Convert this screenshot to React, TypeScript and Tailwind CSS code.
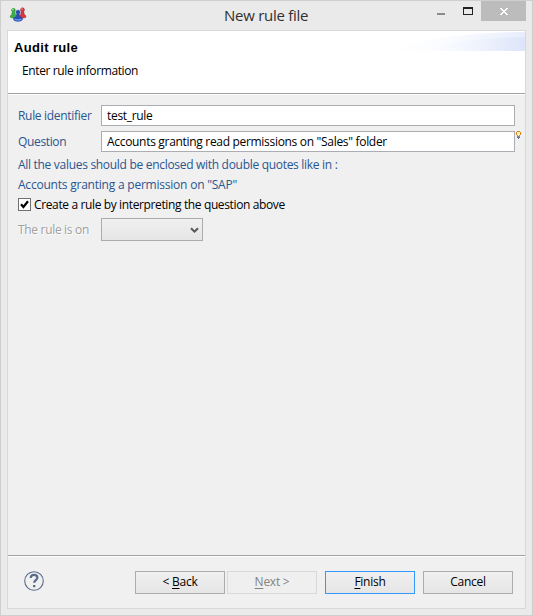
import type { ReactNode } from "react";

function AppIcon() {
  return (
    <svg width="18" height="16" viewBox="0 0 18 16" className="mt-[6px] ml-[8px] shrink-0">
      <g strokeWidth="0.5">
        <path d="M2.600 2.600a1.900 1.900 0 0 1 3.600 0c.3 1-.1 1.500-.6 2.100l.8 2.800 1.200 1v1.700c-1.500 1-4.800 1-6.400 0V8.900l1.500-1.200.6-3c-.6-.6-.9-1.200-.7-2.100z" fill="#3fae45" stroke="#1d7a2d" />
        <path d="M11.600 2.200a2 2 0 0 1 3.800 0c.2 1-.2 1.600-.7 2.200l.6 3.200 1.500 1.200v1.500c-1.500 1-4.600 1-6.200 0V8.800l1-1 .7-3.400c-.6-.6-1-1.200-.7-2.200z" fill="#d8353f" stroke="#8f1c28" />
        <path d="M7 4.600a2.100 2.100 0 0 1 4 0c.2 1-.2 1.700-.8 2.200l.5 2.600 2.600 1.600v2c-2 1.700-6.600 1.700-8.600 0v-2l2.600-1.600.5-2.600C7.200 6.300 6.800 5.600 7 4.600z" fill="#2450b8" stroke="#1a3a94" />
      </g>
      <circle cx="3.800" cy="2.400" r="0.800" fill="#a5eca0" />
      <circle cx="13" cy="2" r="0.800" fill="#ff9a9c" />
      <path d="M5.500 11.500c2.300 1.100 4.700 1.100 7 0v1.200c-2.300 1.200-4.700 1.200-7 0z" fill="#6d9df0" />
    </svg>
  );
}

function TitleBar() {
  return (
    <div className="relative flex h-[29px] shrink-0 items-start">
      <AppIcon />
      <h1 className="absolute top-[2px] left-[223px] font-['Open_Sans',sans-serif] text-[15px] leading-6 tracking-[-0.27px] whitespace-nowrap text-[#303030]">
        New rule file
      </h1>
      <div className="ml-auto flex items-start">
        <div className="mt-[12px] mr-[18px] h-[2px] w-[8px] bg-[#8c8c8c]" />
        <div className="mt-[6px] mr-[8px] h-[8px] w-[10px] border border-t-2 border-[#222]" />
        <div className="mr-[6px] flex h-[20px] w-[45px] items-center justify-center bg-[#bcbcbc]">
          <svg width="8" height="7" viewBox="0 0 8 7" shapeRendering="crispEdges" fill="#fff" className="mt-[1px]">
            <path d="M0 0h2v1H0zM6 0h2v1H6zM1 1h2v1H1zM5 1h2v1H5zM2 2h4v1H2zM3 3h2v1H3zM2 4h4v1H2zM1 5h2v1H1zM5 5h2v1H5zM0 6h2v1H0zM6 6h2v1H6z" />
          </svg>
        </div>
      </div>
    </div>
  );
}

function Swoosh() {
  return (
    <svg width="138" height="20" viewBox="0 0 138 20" className="shrink-0">
      <defs>
        <linearGradient id="outer" x1="0" x2="1">
          <stop offset="0" stopColor="#fff" />
          <stop offset="0.450" stopColor="#fbfcff" />
          <stop offset="1" stopColor="#e7edfb" />
        </linearGradient>
        <linearGradient id="inner" x1="0" x2="1">
          <stop offset="0" stopColor="#fdfeff" />
          <stop offset="0.500" stopColor="#f0f4fd" />
          <stop offset="1" stopColor="#dde5f9" />
        </linearGradient>
      </defs>
      <path d="M0 20C30 9 80 1 138 1v19z" fill="url(#outer)" />
      <path d="M40 20C60 11 92 7 138 6v14z" fill="url(#inner)" />
    </svg>
  );
}

function TextField({ value }: { value: string }) {
  return (
    <div className="h-[21px] w-[414px] border border-[#abadb3] bg-white pl-[5px] leading-[20px] tracking-[-0.31px] whitespace-pre text-black">
      {value}
    </div>
  );
}

function Button({ children, className = "border-[#acacac] from-[#f0f0f0] to-[#e5e5e5] text-black" }: { children: ReactNode; className?: string }) {
  return (
    <button className={`h-[23px] w-[90px] border bg-linear-to-b pb-[1px] text-center leading-[20px] ${className}`}>
      {children}
    </button>
  );
}

function Key({ children }: { children: string }) {
  return <span className="underline underline-offset-2">{children}</span>;
}

export default function App() {
  return (
    <div className="flex h-[616px] w-[533px] flex-col border border-[#cfcfcf] bg-[#eaeaea] font-['Open_Sans',sans-serif] text-[12px] tracking-[-0.25px]">
      <TitleBar />
      <div className="mr-[6px] ml-[6px] flex h-[579px] flex-col border border-[#d8d8d8] bg-[#f0f0f0]">
        <header className="flex h-[63px] shrink-0 justify-between border-b border-[#a0a0a0] bg-white">
          <div className="pl-[6px] text-black">
            <h2 className="mt-[9px] font-['Liberation_Sans',sans-serif] text-[13px] leading-4 font-bold tracking-[0.35px]">Audit rule</h2>
            <p className="mt-[7px] ml-[8px] leading-4 tracking-[-0.38px]">Enter rule information</p>
          </div>
          <Swoosh />
        </header>
        <main className="flex-1 border-t border-white pl-[10px] text-[#2a568f]">
          <div className="mt-[10px] flex h-[21px]">
            <label className="w-[83px] leading-[21px] tracking-[-0.31px]">Rule identifier</label>
            <TextField value="test_rule" />
          </div>
          <div className="mt-[5px] flex h-[21px]">
            <label className="w-[83px] leading-[21px] tracking-[-0.35px]">Question</label>
            <TextField value={'Accounts granting read permissions on "Sales" folder'} />
            <svg width="5" height="8" viewBox="0 0 5 8" className="ml-[1px] shrink-0" shapeRendering="crispEdges">
              <path d="M1 0h3v1H1zM0 1h1v3H0zM4 1h1v3H4zM1 4h1v2H1zM3 4h1v2H3z" fill="#df8416" />
              <path d="M1 1h3v3H1zM2 4h1v1H2z" fill="#fff0c8" />
              <path d="M2 5h1v1H2zM1 6h3v1H1zM2 7h1v1H2z" fill="#69758f" />
            </svg>
          </div>
          <p className="mt-[3px] h-[20px] leading-[20px] tracking-[-0.3px]">All the values should be enclosed with double quotes like in :</p>
          <p className="h-[20px] leading-[20px] tracking-[-0.22px]">Accounts granting a permission on "SAP"</p>
          <div className="flex h-[20px] items-center text-black">
            <span className="mb-[1px] flex size-[13px] items-center justify-center border border-[#707070] bg-white">
              <svg width="9" height="9" viewBox="0 0 9 9">
                <path d="M1 4.300 3.400 7 8 1.200" fill="none" stroke="#000" strokeWidth="2.200" />
              </svg>
            </span>
            <span className="ml-[3px] tracking-[-0.37px]">Create a rule by interpreting the question above</span>
          </div>
          <div className="mt-[3px] flex h-[23px]">
            <span className="w-[83px] leading-[23px] tracking-[-0.32px] text-[#a0a0a0] [text-shadow:1px_1px_0_#fff]">The rule is on</span>
            <div className="flex w-[102px] items-center justify-end border border-[#acacac] bg-linear-to-b from-[#f0f0f0] to-[#e5e5e5] pr-[3px]">
              <svg width="9" height="7" viewBox="0 0 9 7" className="mt-[1px]">
                <path d="M1 1.200 4.500 4.700 8 1.200" fill="none" stroke="#555" strokeWidth="2" />
              </svg>
            </div>
          </div>
        </main>
        <footer className="flex h-[53px] shrink-0 border-t border-[#a0a0a0]">
          <div className="flex flex-1 border-t border-white pt-[14px] pl-[16px]">
            <svg width="20" height="20" viewBox="0 0 20 20" fill="none" stroke="#5b6a8c">
              <circle cx="10" cy="10" r="9.300" strokeWidth="1.100" />
              <path d="M6.700 7c.1-2.200 1.300-3.200 3.300-3.200 2.100 0 3.400 1.100 3.400 2.800 0 2.500-3.200 2.600-3.200 5.200" strokeWidth="2.200" />
              <path d="M9 14h2.300v2.200H9z" fill="#5b6a8c" stroke="none" />
            </svg>
            <div className="ml-[91px] flex">
              <Button>&lt; <Key>B</Key>ack</Button>
              <span className="ml-[2px]"><Button className="border-[#d9d9d9] from-[#efefef] to-[#efefef] text-[#838383]"><Key>N</Key>ext &gt;</Button></span>
              <span className="ml-[8px]"><Button className="border-[#3399ff] from-[#f0f0f0] to-[#e5e5e5] text-black"><Key>F</Key>inish</Button></span>
              <span className="ml-[8px]"><Button>Cancel</Button></span>
            </div>
          </div>
        </footer>
      </div>
    </div>
  );
}
